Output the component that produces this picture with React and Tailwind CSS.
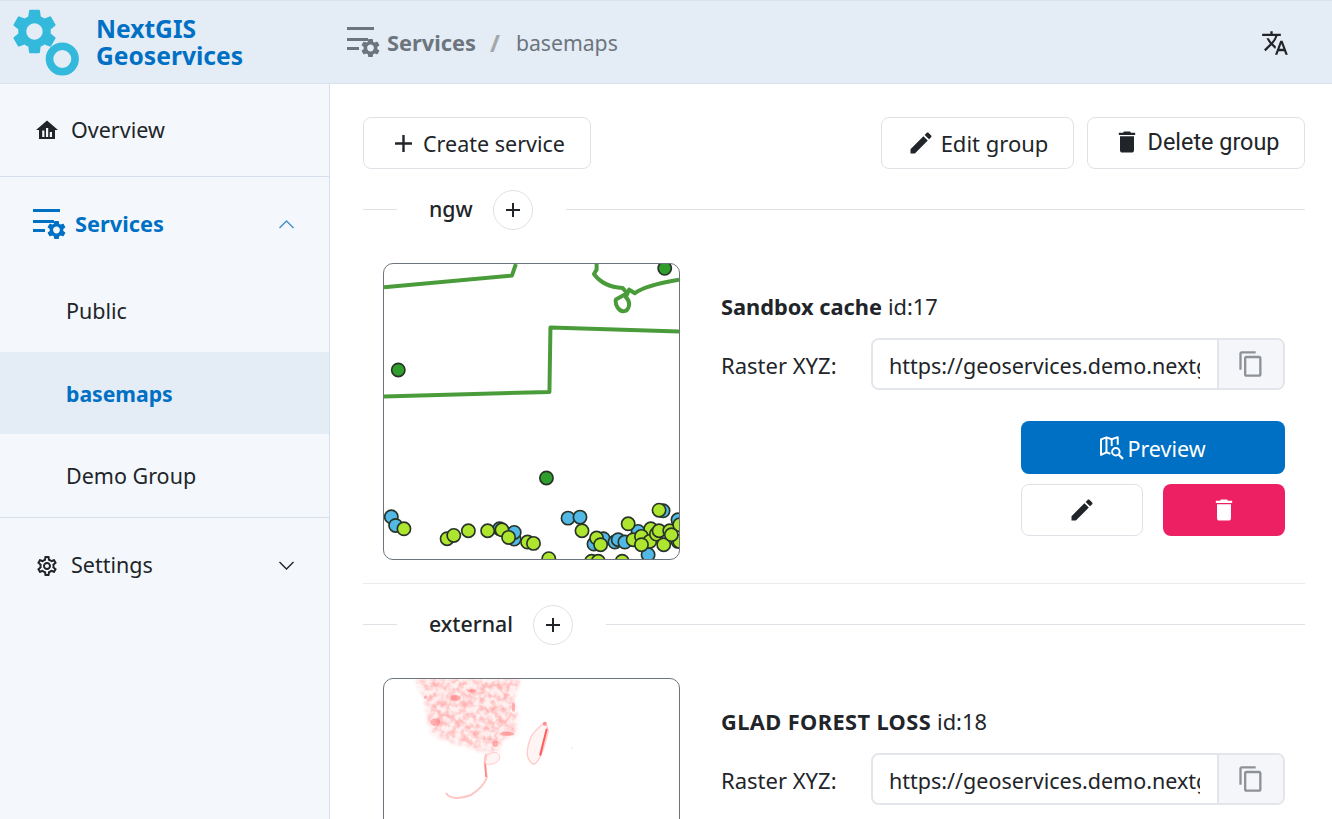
const font = { fontFamily: '"Noto Sans", sans-serif' };

const P = {
  edit: "M3 17.25V21h3.75L17.81 9.94l-3.75-3.75L3 17.25zM20.71 7.04c.39-.39.39-1.02 0-1.41l-2.34-2.34c-.39-.39-1.02-.39-1.41 0l-1.83 1.83 3.75 3.75 1.83-1.83z",
  del: "M6 19c0 1.1.9 2 2 2h8c1.1 0 2-.9 2-2V7H6v12zM19 4h-3.5l-1-1h-5l-1 1H5v2h14V4z",
  translate: "M12.87 15.07l-2.54-2.51.03-.03c1.74-1.94 2.98-4.17 3.71-6.53H17V4h-7V2H8v2H1v1.99h11.17C11.5 7.92 10.44 9.75 9 11.35 8.07 10.32 7.3 9.19 6.69 8h-2c.73 1.63 1.73 3.17 2.98 4.56l-5.09 5.02L4 19l5-5 3.11 3.11.76-2.04zM18.5 10h-2L12 22h2l1.12-3h4.75L21 22h2l-4.5-12zm-2.62 7l1.62-4.33L19.12 17h-3.24z",
  copy: "M16 1H4c-1.1 0-2 .9-2 2v14h2V3h12V1zm3 4H8c-1.1 0-2 .9-2 2v14c0 1.1.9 2 2 2h11c1.1 0 2-.9 2-2V7c0-1.1-.9-2-2-2zm0 16H8V7h11v14z",
  add: "M19 13h-6v6h-2v-6H5v-2h6V5h2v6h6v2z",
  gear: "M19.14 12.94c.04-.3.06-.61.06-.94 0-.32-.02-.64-.07-.94l2.03-1.58c.18-.14.23-.41.12-.61l-1.92-3.32c-.12-.22-.37-.29-.59-.22l-2.39.96c-.5-.38-1.03-.7-1.62-.94l-.36-2.54c-.04-.24-.24-.41-.48-.41h-3.84c-.24 0-.43.17-.47.41l-.36 2.54c-.59.24-1.13.57-1.62.94l-2.39-.96c-.22-.08-.47 0-.59.22L2.74 8.87c-.12.21-.08.47.12.61l2.03 1.58c-.05.3-.09.63-.09.94s.02.64.07.94l-2.03 1.58c-.18.14-.23.41-.12.61l1.92 3.32c.12.22.37.29.59.22l2.39-.96c.5.38 1.03.7 1.62.94l.36 2.54c.05.24.24.41.48.41h3.84c.24 0 .44-.17.47-.41l.36-2.54c.59-.24 1.13-.56 1.62-.94l2.39.96c.22.08.47 0 .59-.22l1.92-3.32c.12-.22.07-.47-.12-.61l-2.01-1.58zM12 15.6c-1.98 0-3.6-1.62-3.6-3.6s1.62-3.6 3.6-3.6 3.6 1.62 3.6 3.6-1.62 3.6-3.6 3.6z",
  gearO: "M19.43 12.98c.04-.32.07-.64.07-.98 0-.34-.03-.66-.07-.98l2.11-1.65c.19-.15.24-.42.12-.64l-2-3.46c-.09-.16-.26-.25-.44-.25-.06 0-.12.01-.17.03l-2.49 1c-.52-.4-1.08-.73-1.69-.98l-.38-2.65C14.46 2.18 14.25 2 14 2h-4c-.25 0-.46.18-.49.42l-.38 2.65c-.61.25-1.17.59-1.69.98l-2.49-1c-.06-.02-.12-.03-.18-.03-.17 0-.34.09-.43.25l-2 3.46c-.13.22-.07.49.12.64l2.11 1.65c-.04.32-.07.65-.07.98 0 .33.03.66.07.98l-2.11 1.65c-.19.15-.24.42-.12.64l2 3.46c.09.16.26.25.44.25.06 0 .12-.01.17-.03l2.49-1c.52.4 1.08.73 1.69.98l.38 2.65c.03.24.24.42.49.42h4c.25 0 .46-.18.49-.42l.38-2.65c.61-.25 1.17-.59 1.69-.98l2.49 1c.06.02.12.03.18.03.17 0 .34-.09.43-.25l2-3.46c.12-.22.07-.49-.12-.64l-2.11-1.65zm-1.98-1.71c.04.31.05.52.05.73 0 .21-.02.43-.05.73l-.14 1.13.89.7 1.08.84-.7 1.21-1.27-.51-1.04-.42-.9.68c-.43.32-.84.56-1.25.73l-1.06.43-.16 1.13-.2 1.35h-1.4l-.19-1.35-.16-1.13-1.06-.43c-.43-.18-.83-.41-1.23-.71l-.91-.7-1.06.43-1.27.51-.7-1.21 1.08-.84.89-.7-.14-1.13c-.03-.31-.05-.54-.05-.74s.02-.43.05-.73l.14-1.13-.89-.7-1.08-.84.7-1.21 1.27.51 1.04.42.9-.68c.43-.32.84-.56 1.25-.73l1.06-.43.16-1.13.2-1.35h1.39l.19 1.35.16 1.13 1.06.43c.43.18.83.41 1.23.71l.91.7 1.06-.43 1.27-.51.7 1.21-1.07.85-.89.7.14 1.13zM12 8c-2.21 0-4 1.79-4 4s1.79 4 4 4 4-1.79 4-4-1.79-4-4-4zm0 6c-1.1 0-2-.9-2-2s.9-2 2-2 2 .9 2 2-.9 2-2 2z",
};

function Icon({ d, className }) {
  return (
    <svg viewBox="0 0 24 24" fill="currentColor" className={className}>
      <path d={d} />
    </svg>
  );
}

function Logo() {
  return (
    <svg viewBox="0 0 84 82" className="w-[84px] h-[82px] shrink-0" fill="#33b9dc">
      <g transform="translate(7.38 3.38) scale(2.26)">
        <path d={P.gear} />
      </g>
      <circle cx="62.3" cy="58" r="12.8" fill="none" stroke="#33b9dc" strokeWidth="7.6" />
    </svg>
  );
}

function ServicesIcon({ className }) {
  return (
    <svg viewBox="0 0 33 30" fill="currentColor" className={className}>
      <rect x="0" y="0" width="27" height="3" />
      <rect x="0" y="11" width="21" height="3" />
      <rect x="0" y="20" width="12" height="3" />
      <g transform="translate(12.1 9.6) scale(0.95)">
        <path d={P.gear} />
      </g>
    </svg>
  );
}

function OverviewIcon() {
  return (
    <svg viewBox="0 0 24 24" fill="#212529" className="w-[24px] h-[24px]">
      <path d="M12 2.5 1 12h3v9h16v-9h3L12 2.5z" />
      <rect x="7.2" y="12.5" width="2.2" height="6.5" fill="#f4f8fc" />
      <rect x="11" y="10" width="2.2" height="9" fill="#f4f8fc" />
      <rect x="14.8" y="14" width="2.2" height="5" fill="#f4f8fc" />
    </svg>
  );
}

function MapSearchIcon() {
  return (
    <svg viewBox="1 0.5 23 23" fill="none" stroke="#fff" strokeWidth="1.9" className="w-[24px] h-[24px]">
      <path d="M11 17.5 7.2 16.2 2 18.6V3.8l5.2-2L12.2 3.6 18 1.6V9" strokeLinejoin="round" />
      <path d="M7.2 2v14M12.2 3.6V10" />
      <circle cx="16.2" cy="15.6" r="3.6" />
      <path d="m19 18.4 4 4" strokeWidth="2.1" />
    </svg>
  );
}

const BLUE = [[62,786],[75,812],[594,790],[630,787],[388,822],[432,853],[432,833],[880,768],[672,868],[700,852],[735,862],[745,855],[765,862],[805,830],[835,900],[925,795],[925,860]];
const LIME = [[100,822],[230,852],[250,842],[294,828],[352,828],[395,825],[415,848],[472,862],[490,866],[536,912],[636,828],[680,850],[692,870],[665,920],[685,920],[757,920],[775,807],[868,766],[843,822],[790,855],[815,845],[840,860],[815,870],[860,838],[868,828],[900,828],[882,870],[930,810],[930,860],[905,840]];
const GREEN = [[83,344],[529,669],[885,38]];

function MapOne() {
  return (
    <svg viewBox="40 25 888 888" className="w-full h-full block">
      <g fill="none" stroke="#4a9c3a" strokeWidth="12" strokeLinejoin="round">
        <path d="M40 95 425 60 437 25" />
        <path d="M40 424 538 410 541 216 928 228" />
        <path d="M680 25V42L672 55C690 80 720 95 758 97L772 113 738 132C735 145 745 167 760 167 778 167 785 140 768 125L778 102 795 113C820 92 880 80 928 72" />
      </g>
      <g stroke="#283428" strokeWidth="5">
        {GREEN.map(([x, y]) => <circle key={x} cx={x} cy={y} r="20" fill="#2f9e2c" />)}
        {BLUE.map(([x, y], i) => <circle key={i} cx={x} cy={y} r="20" fill="#52b9e6" />)}
        {LIME.map(([x, y], i) => <circle key={i} cx={x} cy={y} r="20" fill="#aee62f" />)}
      </g>
    </svg>
  );
}

const AFRICA = "M135 25H450L425 90 440 140 438 185 392 210 385 240 350 245 320 235 215 205 178 175 165 80Z";

function MapTwo() {
  return (
    <svg viewBox="40 25 888 888" className="w-full h-full block">
      <defs>
        <filter id="mottle" x="0" y="0" width="100%" height="100%">
          <feTurbulence type="fractalNoise" baseFrequency="0.055" numOctaves="3" seed="7" />
          <feColorMatrix values="0 0 0 0 1  0 0 0 0 0.25  0 0 0 0 0.25  2.4 0 0 0 -0.85" />
          <feComposite in2="SourceAlpha" operator="in" />
          <feGaussianBlur stdDeviation="1.6" />
        </filter>
        <filter id="soft" x="-20%" y="-20%" width="140%" height="140%"><feGaussianBlur stdDeviation="8" /></filter>
        <filter id="tiny" x="-20%" y="-20%" width="140%" height="140%"><feGaussianBlur stdDeviation="2.2" /></filter>
        <mask id="fade">
          <path d={AFRICA} fill="#fff" filter="url(#soft)" />
        </mask>
      </defs>
      <path d={AFRICA} fill="#ffcccc" opacity=".3" filter="url(#soft)" />
      <g mask="url(#fade)" opacity=".6">
        <rect x="100" y="0" width="380" height="280" fill="#000" filter="url(#mottle)" />
      </g>
      <g filter="url(#tiny)">
        <g fill="#ff7a7a" opacity=".55">
          <ellipse cx="255" cy="82" rx="16" ry="9" />
          <ellipse cx="195" cy="155" rx="14" ry="12" />
          <ellipse cx="305" cy="60" rx="12" ry="5" />
          <ellipse cx="165" cy="80" rx="5" ry="5" />
          <ellipse cx="410" cy="190" rx="22" ry="6" />
          <ellipse cx="375" cy="220" rx="9" ry="10" />
          <ellipse cx="430" cy="110" rx="5" ry="14" />
        </g>
        <path d="M348 250C338 270 345 300 350 320 342 345 325 360 300 375 270 385 240 388 226 368" fill="none" stroke="#ffc4c4" strokeWidth="6" />
        <path d="M345 275 347 320" fill="none" stroke="#ff8585" strokeWidth="5" />
        <path d="M350 255C370 240 390 245 388 265 380 280 360 285 345 280Z" fill="#fff4f4" stroke="#ffcaca" strokeWidth="3" />
        <path d="M525 155C510 165 485 190 480 205 465 250 470 270 490 282 510 275 520 240 535 180Z" fill="#fff4f4" stroke="#ffcaca" strokeWidth="4" />
        <path d="M530 175 510 255" fill="none" stroke="#ff5a5a" strokeWidth="6" />
        <circle cx="524" cy="160" r="6" fill="#ff8f8f" />
        <circle cx="605" cy="232" r="3" fill="#ffe6e6" />
      </g>
    </svg>
  );
}

function SectionHead({ title }) {
  return (
    <div className="flex items-center h-[40px]">
      <div className="w-[34px] -mt-[1px] border-t border-[#dee2e6]" />
      <span className="ml-[32px] -mt-[3px] text-[21.3px] font-medium text-[#212529] leading-none">{title}</span>
      <button className="ml-[20px] w-[40px] h-[40px] rounded-full border border-[#dee2e6] bg-white flex items-center justify-center text-[#212529]">
        <Icon d={P.add} className="w-[24px] h-[24px]" />
      </button>
      <div className="flex-1 -mt-[1px] ml-[33px] border-t border-[#dee2e6]" />
    </div>
  );
}

function ServiceCard({ name, id, map, border, nameClass }) {
  return (
    <div className={`flex pl-[20px] pr-[20px] pt-[33px] pb-[23px] ${border ? "border-b border-[#e9ecef]" : ""}`}>
      <div className="w-[297px] h-[297px] rounded-[10px] border border-[#6c757d] overflow-hidden shrink-0 bg-white">
        {map}
      </div>
      <div className="flex-1 min-w-0 ml-[41px] pt-[29px]">
        <div className="h-[30px] flex items-center text-[21.8px] text-[#212529]">
          <span className={`font-bold ${nameClass}`}>{name}</span>
          <span className="ml-[6px]">id:{id}</span>
        </div>
        <div className="flex items-center mt-[16px]">
          <span className="w-[150px] shrink-0 pt-[2px] text-[22px] text-[#212529]">Raster XYZ:</span>
          <div className="flex flex-1 min-w-0 h-[52px] border-2 border-[#e2e5ea] rounded-[8px] overflow-hidden bg-white">
            <input
              readOnly
              value="https://geoservices.demo.nextgis.com/api/g/basemaps"
              className="flex-1 min-w-0 pl-[16px] pt-[4px] mr-[17px] text-[21.5px] text-[#212529] bg-white outline-none"
              style={font}
            />
            <div className="w-[66px] shrink-0 bg-[#f4f6fa] border-l-2 border-[#e2e5ea] flex items-center justify-center text-[#8e9196]">
              <Icon d={P.copy} className="w-[28px] h-[28px]" />
            </div>
          </div>
        </div>
        <div className="mt-[31px] ml-[300px] flex flex-col gap-[10px]">
          <button className="h-[53px] rounded-[8px] bg-[#0070c4] text-white text-[21.5px] flex items-center justify-center gap-[3px]" style={font}>
            <MapSearchIcon />
            <span className="pt-[3px]">Preview</span>
          </button>
          <div className="flex justify-between">
            <button className="w-[122px] h-[52px] rounded-[8px] border border-[#dee2e6] bg-white flex items-center justify-center text-[#212529]">
              <Icon d={P.edit} className="w-[28px] h-[28px]" />
            </button>
            <button className="w-[122px] h-[52px] rounded-[8px] bg-[#ec2063] flex items-center justify-center text-white">
              <Icon d={P.del} className="w-[28px] h-[28px]" />
            </button>
          </div>
        </div>
      </div>
    </div>
  );
}

function TopButton({ width, icon, label, gap, textClass, labelClass, fontStyle }) {
  return (
    <button
      className={`${width} h-[52px] rounded-[8px] border border-[#dee2e6] bg-white flex items-center justify-center text-[#212529] ${textClass} ${gap}`}
      style={fontStyle}
    >
      {icon}
      <span className={labelClass}>{label}</span>
    </button>
  );
}

export default function App() {
  return (
    <div className="h-screen flex flex-col overflow-hidden bg-white" style={font}>
      <header className="h-[84px] shrink-0 bg-[#e4ecf6] border-y border-[#d8e2ee] flex items-center">
        <div className="w-[347px] shrink-0 flex items-center">
          <Logo />
          <div className="ml-[12px] text-[24.6px] leading-[27px] font-bold text-[#0070c4]">
            <div>NextGIS</div>
            <div>Geoservices</div>
          </div>
        </div>
        <ServicesIcon className="w-[33px] h-[30px] text-[#6c757d]" />
        <span className="ml-[7px] pt-[2px] text-[21.8px] font-bold text-[#6c757d]">Services</span>
        <span className="ml-[14px] pt-[2px] text-[24px] font-bold text-[#a3a7aa]">/</span>
        <span className="ml-[16px] pt-[2px] text-[21.2px] text-[#6c757d]">basemaps</span>
        <div className="ml-auto mr-[43px] mt-[2px] text-[#212529]">
          <Icon d={P.translate} className="w-[28px] h-[28px]" />
        </div>
      </header>
      <div className="flex flex-1 min-h-0">
        <aside className="w-[330px] shrink-0 bg-[#f4f8fc] border-r border-[#d5e0ec] text-[21.5px] text-[#212529]">
          <div className="h-[93px] border-b border-[#d5e0ec] flex items-center pl-[35px]">
            <OverviewIcon />
            <span className="ml-[12px]">Overview</span>
          </div>
          <div className="border-b border-[#d5e0ec]">
            <div className="h-[93px] flex items-center pl-[33px] pr-[34px] text-[#0070c4] font-bold">
              <ServicesIcon className="w-[33px] h-[30px]" />
              <span className="ml-[9px] pt-[2px] text-[21.8px]">Services</span>
              <svg viewBox="0 0 16 10" fill="none" stroke="#3f8fd0" strokeWidth="1.4" className="ml-auto w-[17px] h-[10px]">
                <path d="m1 9 7-7 7 7" />
              </svg>
            </div>
            <div className="h-[82px] flex items-center pl-[66px]">Public</div>
            <div className="h-[82px] flex items-center pl-[66px] pt-[2px] bg-[#e4ecf6] font-bold text-[#0070c4] text-[21.2px]">basemaps</div>
            <div className="h-[83px] flex items-center pl-[66px] pt-[2px]">Demo Group</div>
          </div>
          <div className="h-[95px] flex items-center pl-[35px] pr-[34px]">
            <Icon d={P.gearO} className="w-[24px] h-[24px]" />
            <span className="ml-[12px]">Settings</span>
            <svg viewBox="0 0 16 10" fill="none" stroke="#212529" strokeWidth="1.4" className="ml-auto w-[17px] h-[10px]">
              <path d="m1 1 7 7 7-7" />
            </svg>
          </div>
        </aside>
        <main className="flex-1 min-w-0 pl-[33px] pr-[27px] pt-[33px] overflow-hidden">
          <div className="flex items-center">
            <TopButton width="w-[228px]" gap="gap-[5px]" textClass="text-[21.5px]" labelClass="pt-[2px]" icon={<Icon d={P.add} className="w-[29px] h-[29px]" />} label="Create service" />
            <div className="ml-auto flex gap-[13px]">
              <TopButton width="w-[193px]" gap="gap-[6px]" textClass="text-[22px]" icon={<Icon d={P.edit} className="w-[28px] h-[28px]" />} label="Edit group" />
              <TopButton
                width="w-[218px]"
                gap="gap-[7px]"
                textClass="text-[23.4px] leading-[26px] pb-[2px]"
                fontStyle={{ fontFamily: "Roboto, sans-serif" }}
                icon={<Icon d={P.del} className="w-[28px] h-[28px]" />}
                label="Delete group"
              />
            </div>
          </div>
          <div className="mt-[21px]">
            <SectionHead title="ngw" />
            <ServiceCard name="Sandbox cache" id="17" map={<MapOne />} border nameClass="" />
          </div>
          <div className="mt-[21px]">
            <SectionHead title="external" />
            <ServiceCard name="GLAD FOREST LOSS" id="18" map={<MapTwo />} nameClass="tracking-[0.4px]" />
          </div>
        </main>
      </div>
    </div>
  );
}
